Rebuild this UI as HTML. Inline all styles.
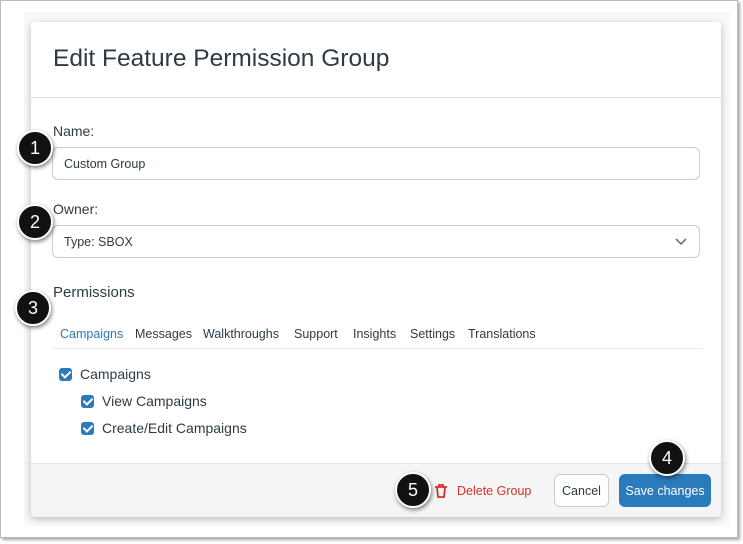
<!DOCTYPE html>
<html><head><style>
*{box-sizing:border-box;margin:0;padding:0}
body{width:743px;height:544px;background:#fff;font-family:"Liberation Sans",sans-serif;position:relative;overflow:hidden}
.frame{position:absolute;left:0;top:0;width:738px;height:538px;border:1px solid #bbb;box-shadow:2px 2px 3px rgba(0,0,0,.35);background:#fff}
.page{position:absolute;left:24px;top:12px;width:706px;height:514px;background:#f9f9f9}
.modal{position:absolute;left:31px;top:22px;width:690px;height:495px;background:#fff;border-radius:4px;box-shadow:0 2px 8px rgba(0,0,0,.25);overflow:hidden}
.hdr{height:76px;border-bottom:1px solid #ddd;padding:23px 22px;font-size:24.5px;color:#2d3b45}
.lbl{position:absolute;left:22px;font-size:14px;color:#2d3b45}
.inp{position:absolute;left:21px;width:648px;height:33px;border:1px solid #c7cdd1;border-radius:6px;font-size:12.5px;color:#2d3b45;padding:9px 11px}
.tabs{position:absolute;top:305px;font-size:12.5px;color:#2d3b45}
.tabs span{position:absolute;white-space:nowrap}
.tline{position:absolute;left:22px;top:326px;width:650px;height:1px;background:#eee}
.cb{position:absolute;font-size:14px;color:#2d3b45;display:flex;align-items:center;gap:8px}
.cb i{display:inline-block;width:13px;height:13px;background:#2b7abc;border-radius:3px;position:relative}
.cb i:after{content:"";position:absolute;left:3.5px;top:1.5px;width:4px;height:7px;border:solid #fff;border-width:0 2px 2px 0;transform:rotate(45deg)}
.ftr{position:absolute;left:0;top:441px;width:690px;height:54px;background:#f5f5f5;border-top:1px solid #e2e2e2}
.btn{position:absolute;top:10px;height:33px;border-radius:6px;font-size:12.5px;display:flex;align-items:center;justify-content:center;white-space:nowrap}
.badge{position:absolute;width:36px;height:36px;border-radius:50%;background:#111;border:2px solid #fff;box-shadow:1px 2px 4px rgba(0,0,0,.5);color:#fff;font-size:18px;display:flex;align-items:center;justify-content:center}
</style></head><body>
<div class="frame"></div>
<div class="page"></div>
<div class="modal">
<div class="hdr">Edit Feature Permission Group</div>
<div class="lbl" style="top:101px">Name:</div>
<div class="inp" style="top:125px">Custom Group</div>
<div class="lbl" style="top:179px">Owner:</div>
<div class="inp" style="top:203px">Type: SBOX<svg style="position:absolute;right:12px;top:12px" width="12" height="8" viewBox="0 0 12 8"><path d="M1 1l5 5 5-5" stroke="#6b7780" stroke-width="1.6" fill="none"/></svg></div>
<div class="lbl" style="top:262px;font-size:15px">Permissions</div>
<div class="tabs"><span style="left:29px;color:#2b7abc">Campaigns</span><span style="left:104px">Messages</span><span style="left:172px">Walkthroughs</span><span style="left:263px">Support</span><span style="left:322px">Insights</span><span style="left:379px">Settings</span><span style="left:437px">Translations</span></div>
<div class="tline"></div>
<div class="cb" style="left:28px;top:344px"><i></i>Campaigns</div>
<div class="cb" style="left:50px;top:371px"><i></i>View Campaigns</div>
<div class="cb" style="left:50px;top:398px"><i></i>Create/Edit Campaigns</div>
<div class="ftr">
<div class="btn" style="left:403px;width:104px;color:#d4312b;justify-content:flex-start;gap:9px"><svg width="14" height="16" viewBox="0 0 14 16"><path d="M1 4h12M5 4V2h4v2M3 4l1 10h6l1-10" stroke="#d4312b" stroke-width="1.8" fill="none"/></svg>Delete Group</div>
<div class="btn" style="left:523px;width:55px;background:#fff;border:1px solid #c7cdd1;color:#2d3b45">Cancel</div>
<div class="btn" style="left:588px;width:92px;background:#2b7abc;color:#fff">Save changes</div>
</div>
</div>
<div class="badge" style="left:17px;top:130px">1</div>
<div class="badge" style="left:17px;top:204px">2</div>
<div class="badge" style="left:15px;top:290px">3</div>
<div class="badge" style="left:649px;top:440px">4</div>
<div class="badge" style="left:395px;top:472px">5</div>
</body></html>
